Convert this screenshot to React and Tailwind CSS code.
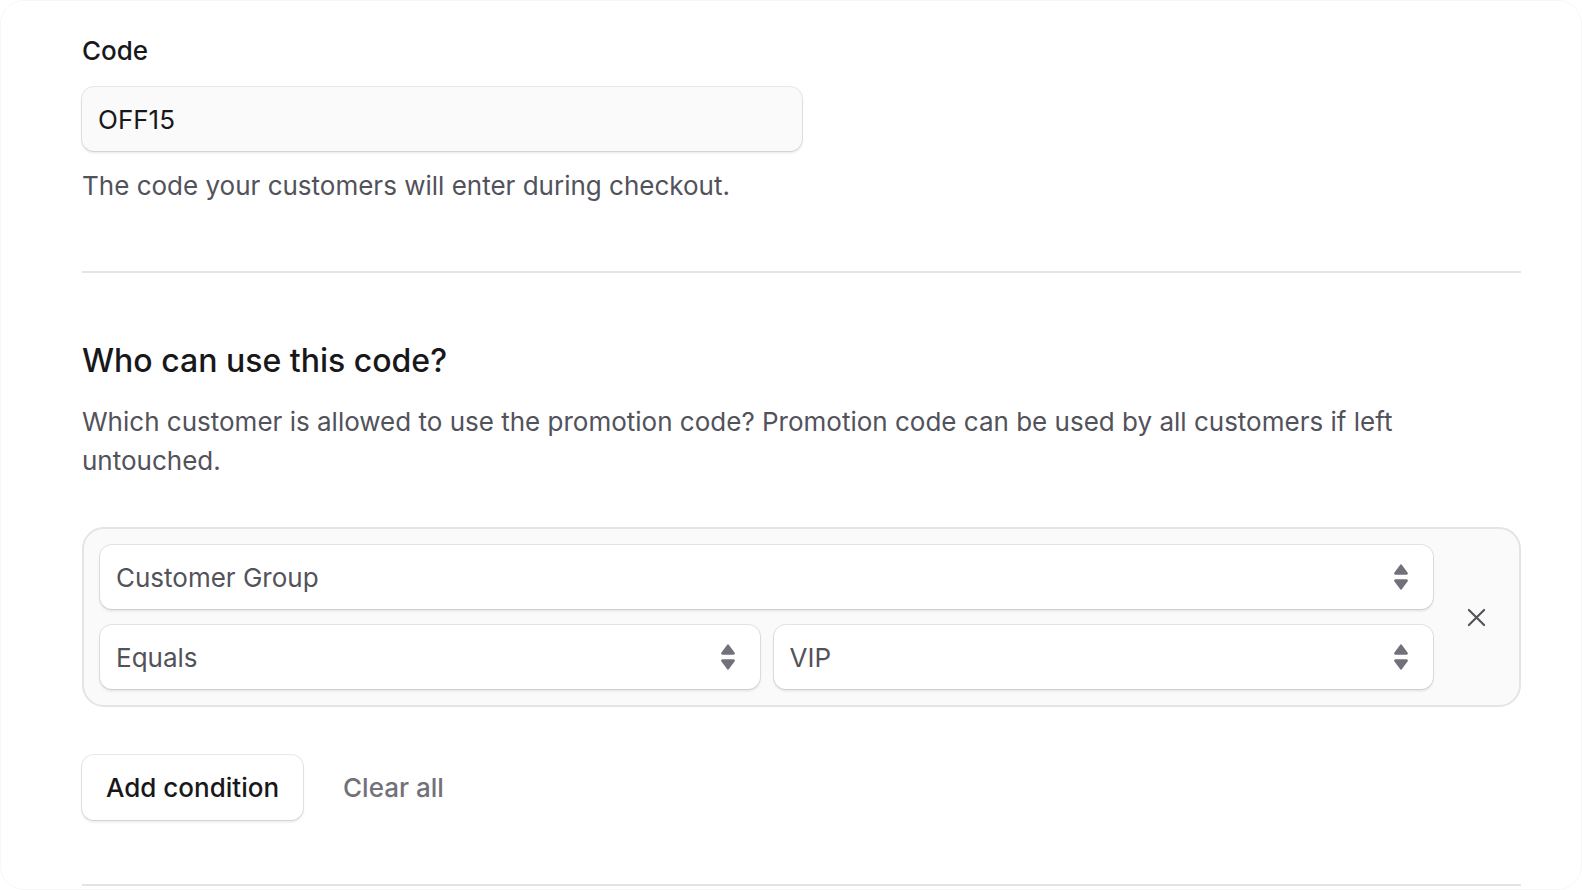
import React from 'react';

const ring = 'shadow-[0_0_0_1px_rgba(0,0,0,0.09),0_2px_3px_rgba(0,0,0,0.1)]';

function Updown() {
  return (
    <svg width="18" height="30" viewBox="0 0 18 30" className="shrink-0 text-[#71717a]">
      <path d="M9 3 L15 11 Q15.6 12 14.4 12 L3.6 12 Q2.4 12 3 11 Z" fill="currentColor" stroke="currentColor" strokeWidth="1.4" strokeLinejoin="round" />
      <path d="M9 27 L15 19 Q15.6 18 14.4 18 L3.6 18 Q2.4 18 3 19 Z" fill="currentColor" stroke="currentColor" strokeWidth="1.4" strokeLinejoin="round" />
    </svg>
  );
}

function Select({ value, className = '' }) {
  return (
    <div className={`flex h-16 items-center justify-between rounded-xl bg-white pl-4 pr-[23px] ${ring} ${className}`}>
      <span className="text-[26px] text-[#52525b]">{value}</span>
      <Updown />
    </div>
  );
}

export default function App() {
  return (
    <div className="h-[890px] overflow-hidden rounded-3xl border border-[#f7f7f8] bg-white font-['Inter',sans-serif] antialiased">
      <div className="pl-[81px] pr-[60px] pt-[34px]">
        {/* Code */}
        <p className="text-[26px] leading-8 font-[450] text-[#18181b]">Code</p>
        <div className={`mt-5 flex h-16 w-[720px] items-center rounded-xl bg-[#fafafa] px-4 ${ring}`}>
          <span className="text-[26px] text-[#18181b]">OFF15</span>
        </div>
        <p className="mt-[19px] text-[26px] leading-8 text-[#52525b]">The code your customers will enter during checkout.</p>

        <div className="mt-[69px] h-[2px] bg-[#e4e4e7]" />

        {/* Who can use */}
        <h2 className="mt-[68px] text-[32px] leading-10 font-[450] text-[#18181b]">Who can use this code?</h2>
        <p className="mt-[21px] pr-[110px] text-[26px] leading-[39px] text-[#52525b]">
          Which customer is allowed to use the promotion code? Promotion code can be used by all customers if left untouched.
        </p>

        <div className="mt-[47px] flex items-center rounded-[22px] border-2 border-[#e4e4e7] bg-[#fafafa] py-4 pl-4">
          <div className="flex flex-1 flex-col gap-4">
            <Select value="Customer Group" />
            <div className="flex gap-[14px]">
              <Select value="Equals" className="flex-1" />
              <Select value="VIP" className="flex-1" />
            </div>
          </div>
          <div className="flex w-[86px] justify-center">
            <svg width="19" height="19" viewBox="0 0 20 20" className="text-[#52525b]">
              <path d="M2 2 L18 18 M18 2 L2 18" stroke="currentColor" strokeWidth="2.2" strokeLinecap="round" />
            </svg>
          </div>
        </div>

        <div className="mt-12 flex items-center gap-10">
          <button className={`h-[65px] rounded-xl bg-white px-6 text-[26px] font-[450] text-[#18181b] ${ring}`}>Add condition</button>
          <span className="text-[26px] font-[450] text-[#71717a]">Clear all</span>
        </div>

        <div className="mt-16 h-[2px] bg-[#e4e4e7]" />
      </div>
    </div>
  );
}
